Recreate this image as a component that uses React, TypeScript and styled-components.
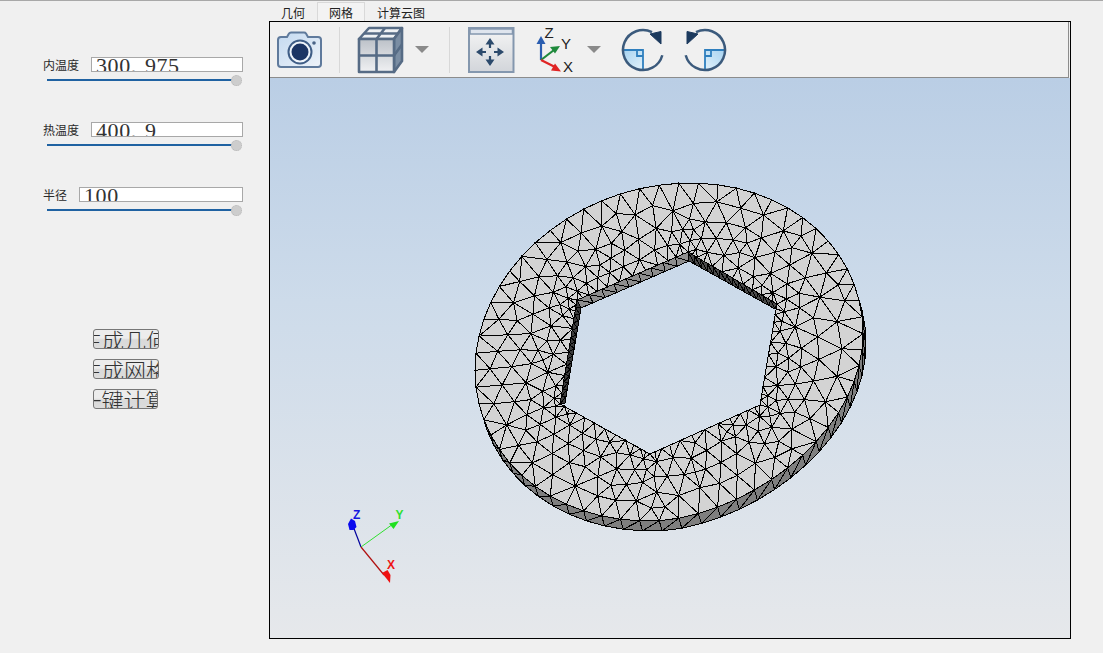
import React from 'react';
import styled, { createGlobalStyle } from 'styled-components';

type Pt = [number, number];

// seeded so the mesh comes out the same on every load
const makeRng = (seed: number) => () => {
  seed = (seed + 0x6d2b79f5) | 0;
  let t = Math.imul(seed ^ (seed >>> 15), 1 | seed);
  t = (t + Math.imul(t ^ (t >>> 7), 61 | t)) ^ t;
  return ((t ^ (t >>> 14)) >>> 0) / 4294967296;
};

const HEX: Pt[] = [[688, 252], [777, 304], [760, 405], [650, 454], [560, 404], [577, 300]];
const HEX_LOW: Pt[] = [[689, 261], [775, 309], [760, 405], [650, 454], [565, 403], [581, 308]];
const OUTER_OFFSET: Pt = [3, 10];
const HEX_DIV = 12;
const OUTER_DIV = 62;

const lerp = (a: Pt, b: Pt, k: number): Pt => [a[0] + (b[0] - a[0]) * k, a[1] + (b[1] - a[1]) * k];
const dist = (a: Pt, b: Pt) => Math.hypot(a[0] - b[0], a[1] - b[1]);

const outerAt = (t: number): Pt => {
  const c = Math.cos(t);
  const s = Math.sin(t);
  const squeeze = c > 0 && s > 0 ? 12 * c * s : 0;
  return [669 + 194 * c, 352 - 18.3 * c + 168 * s - squeeze];
};

const inPoly = (p: Pt, poly: Pt[]) => {
  let inside = false;
  for (let i = 0, j = poly.length - 1; i < poly.length; j = i++) {
    const [xi, yi] = poly[i];
    const [xj, yj] = poly[j];
    if (yi > p[1] !== yj > p[1] && p[0] < ((xj - xi) * (p[1] - yi)) / (yj - yi) + xi) inside = !inside;
  }
  return inside;
};

const segDist = (p: Pt, a: Pt, b: Pt) => {
  const dx = b[0] - a[0];
  const dy = b[1] - a[1];
  const k = Math.max(0, Math.min(1, ((p[0] - a[0]) * dx + (p[1] - a[1]) * dy) / (dx * dx + dy * dy)));
  return dist(p, lerp(a, b, k));
};

const meshSize = (p: Pt) => {
  let edge = 1e9;
  let corner = 1e9;
  HEX.forEach((v, i) => {
    edge = Math.min(edge, segDist(p, v, HEX[(i + 1) % 6]));
    corner = Math.min(corner, dist(p, v));
  });
  return Math.min(20, 9.5 + edge * 0.13, 6.5 + corner * 0.2);
};

type Circ = { v: [number, number, number]; x: number; y: number; r: number };

const circum = (pts: Pt[], a: number, b: number, c: number): Circ => {
  const [ax, ay] = pts[a];
  const [bx, by] = pts[b];
  const [cx, cy] = pts[c];
  const d = 2 * (ax * (by - cy) + bx * (cy - ay) + cx * (ay - by)) || 1e-9;
  const aa = ax * ax + ay * ay;
  const bb = bx * bx + by * by;
  const cc = cx * cx + cy * cy;
  const x = (aa * (by - cy) + bb * (cy - ay) + cc * (ay - by)) / d;
  const y = (aa * (cx - bx) + bb * (ax - cx) + cc * (bx - ax)) / d;
  return { v: [a, b, c], x, y, r: (x - ax) ** 2 + (y - ay) ** 2 };
};

const triangulate = (input: Pt[]) => {
  const n = input.length;
  const pts: Pt[] = [...input, [-6000, -6000], [8000, -6000], [1000, 9000]];
  let tris = [circum(pts, n, n + 1, n + 2)];
  for (let i = 0; i < n; i++) {
    const [px, py] = pts[i];
    const keep: Circ[] = [];
    const edges = new Map<string, [number, number]>();
    for (const t of tris) {
      if ((px - t.x) ** 2 + (py - t.y) ** 2 < t.r) {
        const [a, b, c] = t.v;
        for (const [u, w] of [[a, b], [b, c], [c, a]]) {
          const key = u < w ? `${u}_${w}` : `${w}_${u}`;
          if (edges.has(key)) edges.delete(key);
          else edges.set(key, [u, w]);
        }
      } else keep.push(t);
    }
    edges.forEach(([u, w]) => keep.push(circum(pts, u, w, i)));
    tris = keep;
  }
  return tris.filter((t) => t.v.every((k) => k < n)).map((t) => t.v);
};

const buildMesh = () => {
  const rng = makeRng(20);
  const wiggle = () => (rng() - 0.5) * 0.02;
  const rim: Pt[] = [];
  for (let i = 0; i < OUTER_DIV; i++) {
    const [x, y] = outerAt((i / OUTER_DIV) * Math.PI * 2);
    rim.push([x + wiggle(), y + wiggle()]);
  }
  const hole: Pt[] = [];
  HEX.forEach((v, i) => {
    for (let k = 0; k < HEX_DIV; k++) {
      // points crowd towards the hexagon's corners
      const u = k / HEX_DIV;
      const [x, y] = lerp(v, HEX[(i + 1) % 6], u - Math.sin(u * Math.PI * 2) * 0.07);
      hole.push([x + wiggle(), y + wiggle()]);
    }
  });
  const fixed = [...rim, ...hole];
  const inner: Pt[] = [];
  for (let i = 0; i < 14000; i++) {
    const p: Pt = [470 + rng() * 400, 178 + rng() * 350];
    if (!inPoly(p, rim) || inPoly(p, HEX)) continue;
    const h = meshSize(p) * 0.92;
    if (fixed.every((q) => dist(q, p) > h) && inner.every((q) => dist(q, p) > h)) inner.push(p);
  }

  const keepTri = (all: Pt[]) =>
    triangulate(all).filter(([a, b, c]) => {
      const mid: Pt = [(all[a][0] + all[b][0] + all[c][0]) / 3, (all[a][1] + all[b][1] + all[c][1]) / 3];
      return inPoly(mid, rim) && !inPoly(mid, HEX);
    });

  // a few rounds of smoothing, the free points move to the middle of their neighbours
  let all = [...fixed, ...inner];
  for (let round = 0; round < 4; round++) {
    const sum = all.map(() => [0, 0, 0]);
    keepTri(all).forEach((tri) => {
      tri.forEach((a) =>
        tri.forEach((b) => {
          if (a === b) return;
          sum[a][0] += all[b][0];
          sum[a][1] += all[b][1];
          sum[a][2] += 1;
        }),
      );
    });
    all = all.map((p, i) => (i < fixed.length || !sum[i][2] ? p : [sum[i][0] / sum[i][2], sum[i][1] / sum[i][2]]));
  }

  const face = keepTri(all)
    .map(([a, b, c]) => `M${all[a][0].toFixed(1)} ${all[a][1].toFixed(1)}L${all[b][0].toFixed(1)} ${all[b][1].toFixed(1)}L${all[c][0].toFixed(1)} ${all[c][1].toFixed(1)}Z`)
    .join('');

  const quad = (a: Pt, b: Pt, c: Pt, d: Pt) =>
    `M${a[0]} ${a[1]}L${b[0]} ${b[1]}L${c[0]} ${c[1]}L${d[0]} ${d[1]}ZM${a[0]} ${a[1]}L${c[0]} ${c[1]}`;

  let rimWall = '';
  rim.forEach((a, i) => {
    const b = rim[(i + 1) % rim.length];
    const nx = b[1] - a[1];
    const ny = a[0] - b[0];
    // rim runs clockwise on screen, outward normal is (dy, -dx)
    if (nx * OUTER_OFFSET[0] + ny * OUTER_OFFSET[1] <= 0) return;
    const shift = (p: Pt): Pt => [p[0] + OUTER_OFFSET[0], p[1] + OUTER_OFFSET[1]];
    rimWall += quad(a, b, shift(b), shift(a));
  });

  const holeWall = (from: number, to: number, parts: number) => {
    let d = '';
    for (let k = 0; k < parts; k++) {
      d += quad(
        lerp(HEX[from], HEX[to], k / parts),
        lerp(HEX[from], HEX[to], (k + 1) / parts),
        lerp(HEX_LOW[from], HEX_LOW[to], (k + 1) / parts),
        lerp(HEX_LOW[from], HEX_LOW[to], k / parts),
      );
    }
    return d;
  };

  return { face, rimWall, wallTop: holeWall(5, 0, 9), wallRight: holeWall(0, 1, 14), wallLeft: holeWall(4, 5, 14) };
};

const mesh = buildMesh();

const GlobalStyle = createGlobalStyle`
  html, body {
    margin: 0;
    padding: 0;
    background: #f0f0f0;
  }
`;

const Page = styled.div`
  width: 1103px;
  height: 653px;
  box-sizing: border-box;
  border-top: 1px solid #a8a8a8;
  display: flex;
  overflow: hidden;
  background: #f0f0f0;
  font-family: "Noto Sans CJK SC", "Liberation Sans", sans-serif;
  color: #222;
`;

const SidePanel = styled.div`
  width: 269px;
  flex: none;
  padding-top: 56px;
  box-sizing: border-box;
`;

const Field = styled.div`
  width: 243px;
  margin-bottom: 37px;
`;

const FieldRow = styled.div`
  display: flex;
  align-items: center;
  justify-content: space-between;
  height: 15px;
  padding-left: 43px;
  box-sizing: border-box;
`;

const FieldLabel = styled.span`
  font-size: 12px;
  line-height: 15px;
  color: #2a2a2a;
`;

const FieldBox = styled.div<{ $width: number }>`
  width: ${(p) => p.$width}px;
  height: 15px;
  box-sizing: border-box;
  border: 1px solid #a8a8a8;
  background: #fff;
  overflow: hidden;
  padding-left: 4px;
  font-family: "Liberation Serif", serif;
  font-size: 22px;
  line-height: 15px;
  letter-spacing: 0.6px;
  color: #333;
  white-space: nowrap;
`;

const Point = styled.span`
  padding-right: 8px;
`;

const Slider = styled.div`
  position: relative;
  margin: 3px 0 0 47px;
  height: 10px;
  width: 196px;
  display: flex;
  align-items: center;
`;

const SliderTrack = styled.div`
  width: 190px;
  height: 2px;
  background: #1f62a2;
`;

const SliderThumb = styled.div`
  position: absolute;
  right: 1px;
  top: 0;
  width: 11px;
  height: 11px;
  box-sizing: border-box;
  border-radius: 50%;
  background: #cdcdcd;
  border: 1px dotted #b8b8b8;
`;

const ButtonStack = styled.div`
  margin: 114px 0 0 93px;
  display: flex;
  flex-direction: column;
  gap: 10px;
`;

const ActionButton = styled.button<{ $width: number }>`
  width: ${(p) => p.$width}px;
  height: 20px;
  padding: 0 4px 0 0;
  display: flex;
  justify-content: center;
  align-items: center;
  box-sizing: border-box;
  overflow: hidden;
  border: 1px solid #777;
  border-radius: 3px;
  background: linear-gradient(#ececec 0%, #ececec 45%, #d9d9d9 55%, #dcdcdc 100%);
  font-family: "Noto Sans CJK SC", sans-serif;
  font-size: 22px;
  font-weight: 300;
  line-height: 20px;
  color: #333;
  white-space: nowrap;
`;

const MainColumn = styled.div`
  width: 802px;
  flex: none;
  padding-top: 1px;
`;

const TabBar = styled.div`
  display: flex;
  height: 19px;
`;

const Tab = styled.div<{ $active?: boolean }>`
  height: 19px;
  box-sizing: border-box;
  padding: 0 11px;
  font-size: 12px;
  line-height: 20px;
  color: #222;
  background: ${(p) => (p.$active ? '#f3f3f3' : 'transparent')};
  border: 1px solid ${(p) => (p.$active ? '#d9d9d9' : 'transparent')};
  border-bottom: none;
`;

const Frame = styled.div`
  height: 618px;
  box-sizing: border-box;
  border: 1px solid #000;
  display: flex;
  flex-direction: column;
`;

const Toolbar = styled.div`
  height: 56px;
  flex: none;
  box-sizing: border-box;
  padding-left: 6px;
  display: flex;
  align-items: center;
  margin-right: 1px;
  border-right: 1px solid #8c8c8c;
  border-bottom: 1px solid #8c8c8c;
  background: #f0f0f0;
`;

const ToolSlot = styled.div<{ $gap: number; $flip?: boolean }>`
  margin-left: ${(p) => p.$gap}px;
  display: flex;
  transform: ${(p) => (p.$flip ? 'scaleX(-1)' : 'none')};
`;

const Separator = styled.div<{ $gap: number }>`
  margin-left: ${(p) => p.$gap}px;
  width: 1px;
  height: 46px;
  background: #d8d8d8;
`;

const Caret = styled.div<{ $gap: number }>`
  margin-left: ${(p) => p.$gap}px;
  width: 0;
  height: 0;
  border-left: 7px solid transparent;
  border-right: 7px solid transparent;
  border-top: 7px solid #8a8a8a;
`;

const Viewport = styled.div`
  flex: 1;
  position: relative;
  background: linear-gradient(#bacee5 0%, #cddbea 40%, #e6e8eb 100%);
`;

const Scene = styled.svg`
  display: block;
  width: 800px;
  height: 560px;
`;

const CameraIcon = () => (
  <svg width="46" height="40" viewBox="276 30 46 40">
    <defs>
      <linearGradient id="camBody" x1="0" y1="0" x2="1" y2="1">
        <stop offset="0" stopColor="#c3d9f0" />
        <stop offset="1" stopColor="#eef3f9" />
      </linearGradient>
    </defs>
    <path
      d="M281 37h6l2-3.5q.6-1 2-1h13q1.400 0 2 1l2 3.500h10q3 0 3 3v24q0 3-3 3h-37q-3 0-3-3v-24q0-3 3-3z"
      fill="url(#camBody)"
      stroke="#5f7a9c"
      strokeWidth="2"
    />
    <circle cx="300" cy="52" r="11.500" fill="#f0f5fb" stroke="#3f5d86" strokeWidth="2" />
    <circle cx="300" cy="52" r="8.500" fill="#1c3564" />
    <circle cx="314" cy="43" r="1.800" fill="#4a6487" />
  </svg>
);

const CubeIcon = () => (
  <svg width="47" height="48" viewBox="357 26 47 48">
    <defs>
      <linearGradient id="cubeFront" x1="0" y1="0" x2="0" y2="1">
        <stop offset="0" stopColor="#bcc1c8" />
        <stop offset="1" stopColor="#f0f1f3" />
      </linearGradient>
    </defs>
    <g stroke="#566b85" strokeWidth="2.600" strokeLinejoin="round">
      <path d="M359 39L369 28H402L394 39Z" fill="#eef1f4" />
      <path d="M394 39L402 28V61L394 72Z" fill="#7a8da3" />
      <path d="M359 39H394V72H359Z" fill="url(#cubeFront)" />
      <path d="M376.500 39V72M359 55.500H394M376.500 39L385 28M364 33.500H398M394 55.500L402 44.500" fill="none" />
    </g>
  </svg>
);

const FitIcon = () => (
  <svg width="47" height="46" viewBox="468 27 47 46">
    <defs>
      <linearGradient id="fitFill" x1="0" y1="0" x2="0" y2="1">
        <stop offset="0" stopColor="#f5f5f5" />
        <stop offset="1" stopColor="#d2d5da" />
      </linearGradient>
    </defs>
    <rect x="469" y="28" width="44.500" height="44" fill="url(#fitFill)" stroke="#8497ae" strokeWidth="2" />
    <rect x="470" y="29" width="42.500" height="5" fill="#dfe5ee" stroke="#8497ae" strokeWidth="1.500" />
    <path d="M478 52H486M494 52H502M490 44V48M490 56V60" stroke="#2c4a6c" strokeWidth="2.200" fill="none" />
    <path d="M490 38l-4.500 6.500h9zM490 66l-4.500-6.500h9zM476 52l6.500-4.500v9zM504 52l-6.500-4.500v9z" fill="#2c4a6c" />
  </svg>
);

const AxesIcon = () => (
  <svg width="43" height="48" viewBox="532 26 43 48">
    <path d="M541 60V42" stroke="#2a5db0" strokeWidth="2.200" />
    <path d="M541 36l-4.500 8h9z" fill="#2a5db0" />
    <path d="M541 60L554 50" stroke="#1f8a3c" strokeWidth="2.200" />
    <path d="M560 46l-10 1 5 6.500z" fill="#1f8a3c" />
    <path d="M541 60L555 67" stroke="#e02424" strokeWidth="2.200" />
    <path d="M561 71.500l-10-1 4-7z" fill="#e02424" />
    <g fontFamily="'Liberation Sans', sans-serif" fontSize="15" fill="#222">
      <text x="544.500" y="38">Z</text>
      <text x="561" y="48.500">Y</text>
      <text x="563" y="71.500">X</text>
    </g>
  </svg>
);

const RotateIcon = ({ id }: { id: string }) => (
  <svg width="44" height="46" viewBox="621 26 44 46">
    <defs>
      <linearGradient id={id} x1="0" y1="0" x2="1" y2="1">
        <stop offset="0" stopColor="#a6d2f0" />
        <stop offset="1" stopColor="#e2f2fb" />
      </linearGradient>
    </defs>
    <path d="M643 49H623A20 20 0 0 0 643 69Z" fill={`url(#${id})`} />
    <path d="M623 49H643V69M637 49V55H643" fill="none" stroke="#2f7fbe" strokeWidth="1.800" />
    <path d="M662.300 54.200A20 20 0 1 1 652 31.200" fill="none" stroke="#3b5a7c" strokeWidth="2.500" />
    <path d="M650 33L661 30.500V43Z" fill="#1c3a5e" stroke="#1c3a5e" strokeLinejoin="round" />
  </svg>
);

const Triad = () => (
  <g>
    <path d="M361 547L353 526" stroke="#00009c" strokeWidth="1.200" />
    <path d="M361 547L393 524" stroke="#30e030" strokeWidth="1" />
    <path d="M361 547L384 575" stroke="#b01010" strokeWidth="1.200" />
    <path d="M348 524l3-5.500 4 2.500 1.500 6-3 3h-4z" fill="#0a0aee" />
    <path d="M399 521l-10 2.500 4.500 5.500z" fill="#20e020" />
    <path d="M390 583l-8-10 5.500-3 3 5z" fill="#ee1010" />
    <g fontFamily="'Liberation Sans', sans-serif" fontSize="12" fontWeight="700">
      <text x="353" y="519" fill="#1414e0">Z</text>
      <text x="395.500" y="519" fill="#30e030">Y</text>
      <text x="387" y="569" fill="#ee1515">X</text>
    </g>
  </g>
);

const MeshPart = () => (
  <g shapeRendering="crispEdges" stroke="#000" strokeWidth="1">
    <path d={mesh.rimWall} fill="#7f7f7f" />
    <path d={mesh.wallTop} fill="#8e8e8e" />
    <path d={mesh.wallRight} fill="#4a4a4a" />
    <path d={mesh.wallLeft} fill="#3c3c3c" />
    <path d={mesh.face} fill="#d3d3d3" />
  </g>
);

const fields = [
  { label: '内温度', whole: '300', frac: '975', width: 152 },
  { label: '热温度', whole: '400', frac: '9', width: 152 },
  { label: '半径', whole: '100', frac: '', width: 164 },
];

const actions = [
  { text: '生成几何', width: 66 },
  { text: '生成网格', width: 66 },
  { text: '一键计算', width: 65 },
];

export default function App() {
  return (
    <>
      <GlobalStyle />
      <Page>
        <SidePanel>
          {fields.map((f) => (
            <Field key={f.label}>
              <FieldRow>
                <FieldLabel>{f.label}</FieldLabel>
                <FieldBox $width={f.width}>
                  {f.whole}
                  {f.frac && <Point>.</Point>}
                  {f.frac}
                </FieldBox>
              </FieldRow>
              <Slider>
                <SliderTrack />
                <SliderThumb />
              </Slider>
            </Field>
          ))}
          <ButtonStack>
            {actions.map((a) => (
              <ActionButton key={a.text} $width={a.width}>
                {a.text}
              </ActionButton>
            ))}
          </ButtonStack>
        </SidePanel>
        <MainColumn>
          <TabBar>
            <Tab>几何</Tab>
            <Tab $active>网格</Tab>
            <Tab>计算云图</Tab>
          </TabBar>
          <Frame>
            <Toolbar>
              <ToolSlot $gap={0}><CameraIcon /></ToolSlot>
              <Separator $gap={17} />
              <ToolSlot $gap={17}><CubeIcon /></ToolSlot>
              <Caret $gap={11} />
              <Separator $gap={20} />
              <ToolSlot $gap={18}><FitIcon /></ToolSlot>
              <ToolSlot $gap={17}><AxesIcon /></ToolSlot>
              <Caret $gap={12} />
              <ToolSlot $gap={20}><RotateIcon id="rotA" /></ToolSlot>
              <ToolSlot $gap={18} $flip><RotateIcon id="rotB" /></ToolSlot>
            </Toolbar>
            <Viewport>
              <Scene viewBox="270 78 800 560">
                <MeshPart />
                <Triad />
              </Scene>
            </Viewport>
          </Frame>
        </MainColumn>
      </Page>
    </>
  );
}
